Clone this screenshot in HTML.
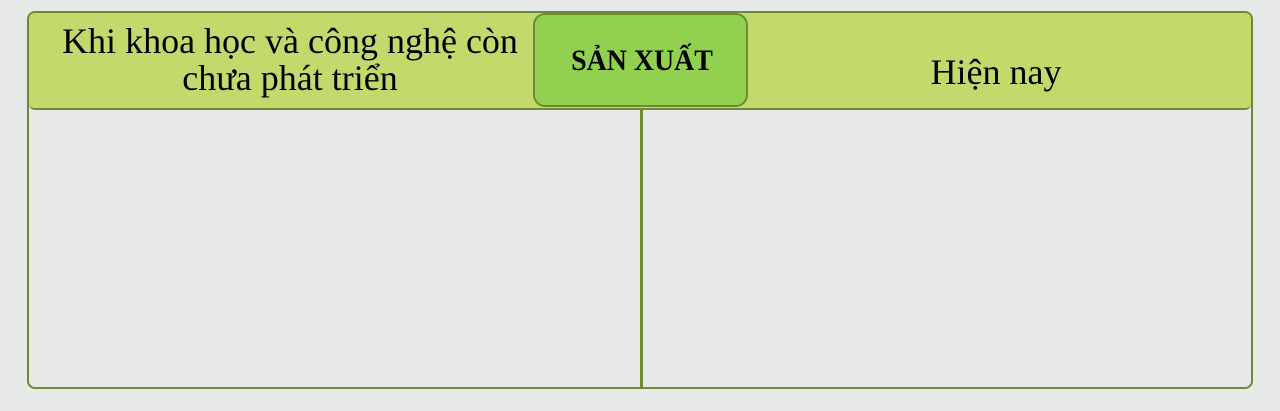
<!DOCTYPE html>
<html><head><meta charset="utf-8"><style>
body{margin:0;width:1280px;height:411px;background:#e6e9e7;position:relative;overflow:hidden;font-family:"Liberation Serif",serif}
.box{position:absolute;left:27px;top:11px;width:1222px;height:374px;border:2.5px solid #6f8a36;border-radius:8px;background:#e6e9e7;overflow:hidden}
.hdr{position:absolute;left:0;top:0;right:0;height:95px;background:#c3d96b;border-bottom:2.5px solid #6f8a36;border-radius:0 0 6px 6px}
.div{position:absolute;left:611px;top:96px;width:2.5px;bottom:0;background:#6f8a36}
.tab{position:absolute;left:533px;top:13px;width:211px;height:90px;background:#92d050;border:2.5px solid #6f8a36;border-radius:12px}
.t{position:absolute;color:#000;font-size:36px;line-height:37px;text-align:center;white-space:nowrap}
</style></head><body>
<div class="box"><div class="hdr"></div><div class="div"></div></div>
<div class="tab"></div>
<div class="t" style="left:20px;width:540px;top:23px">Khi khoa học và công nghệ còn<br>chưa phát triển</div>
<div class="t" style="left:520px;width:244px;top:43px;font-weight:bold;font-size:30px;line-height:36px;transform:scaleX(0.93)">SẢN XUẤT</div>
<div class="t" style="left:846px;width:300px;top:54px">Hiện nay</div>
</body></html>
